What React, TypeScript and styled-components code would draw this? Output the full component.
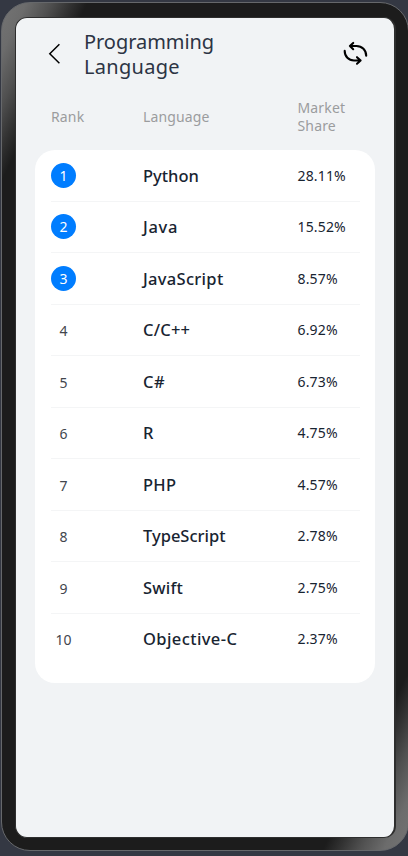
import React from "react";
import styled, { createGlobalStyle } from "styled-components";

const GlobalStyle = createGlobalStyle`
  * { box-sizing: border-box; }
  body { margin: 0; background: #343843; overflow: hidden; }
`;

const Desk = styled.div`
  width: 408px;
  height: 856px;
  padding: 2px 0 0 1px;
  overflow: hidden;
  background: #343843;
  font-family: "Noto Sans", "Open Sans", sans-serif;
`;

const Device = styled.div`
  width: 408px;
  height: 849px;
  padding: 14px 11px 13px 13px;
  border: 1px solid #66686b;
  border-radius: 29px;
  background: linear-gradient(
    to bottom right,
    #747474 0%, #6c6c6c 3%, #505050 6%, #323232 8.5%, #1c1c1c 10.5%,
    #1c1c1c 89.5%, #323232 91.5%, #505050 94%, #6c6c6c 97%, #747474 100%
  );
`;

const Screen = styled.main`
  width: 381px;
  height: 821px;
  border: 1px solid #2e2e2e;
  border-right-width: 2px;
  border-radius: 12px;
  background: #f1f3f5;
  overflow: hidden;
  display: flex;
  flex-direction: column;
`;

const TitleBar = styled.header`
  display: flex;
  align-items: center;
  height: 70px;
  padding: 1px 26px 0 31px;
`;

const IconButton = styled.button`
  display: flex;
  padding: 0;
  border: 0;
  background: none;
  color: #000;
`;

const Title = styled.h1`
  flex: 1;
  margin: 0 0 0 23px;
  font-size: 20px;
  font-weight: 400;
  line-height: 25px;
  color: #2c3444;
`;

const TitleLine = styled.span<{ $spacing: number }>`
  display: block;
  letter-spacing: ${({ $spacing }) => $spacing}px;
`;

const columns = "92px 154.5px 1fr";

const TableHead = styled.div`
  display: grid;
  grid-template-columns: ${columns};
  align-items: center;
  height: 62px;
  margin: 0 19px;
  padding: 0 0 5px 16px;
  font-size: 14px;
  line-height: 18px;
  color: #9b9c9e;
`;

const HeadCell = styled.span`
  max-width: 72px;
  letter-spacing: 0.15px;
`;

const Card = styled.section`
  height: 533px;
  margin: 0 19px;
  padding: 0 15px 0 16px;
  border-radius: 20px;
  background: #fff;
`;

const Row = styled.div`
  display: grid;
  grid-template-columns: ${columns};
  align-items: center;
  height: 51.5px;
  border-bottom: 1px solid #f4f5f6;
  &:last-child { border-bottom-color: transparent; }
`;

const Rank = styled.span<{ $top: boolean }>`
  width: 25px;
  height: 25px;
  border-radius: 50%;
  background: ${({ $top }) => ($top ? "#007dff" : "transparent")};
  color: ${({ $top }) => ($top ? "#fff" : "#42464d")};
  font-size: 14px;
  line-height: ${({ $top }) => ($top ? 25 : 28)}px;
  text-align: center;
`;

const Name = styled.span<{ $spacing: number }>`
  padding-top: 1px;
  font-size: 16.5px;
  font-weight: 500;
  line-height: 22px;
  letter-spacing: ${({ $spacing }) => $spacing}px;
  color: #182431;
  white-space: nowrap;
`;

const Share = styled.span`
  padding-top: 0.5px;
  font-size: 14px;
  line-height: 20px;
  letter-spacing: 0.15px;
  color: #182431;
`;

const languages: [string, string, number][] = [
  ["Python", "28.11%", 0],
  ["Java", "15.52%", 0.7],
  ["JavaScript", "8.57%", 0.3],
  ["C/C++", "6.92%", 0.2],
  ["C#", "6.73%", 0.6],
  ["R", "4.75%", 0],
  ["PHP", "4.57%", 0.3],
  ["TypeScript", "2.78%", 0],
  ["Swift", "2.75%", 0.2],
  ["Objective-C", "2.37%", 0.4],
];

const BackIcon = () => (
  <svg width="14" height="22" viewBox="0 0 14 22" fill="none" stroke="currentColor" strokeWidth="1.5">
    <path d="M12.4 1.3 2.8 10.8l9.6 9.4" />
  </svg>
);

const RefreshIcon = () => (
  <svg width="26" height="27" viewBox="0 0 26 27" fill="none" stroke="currentColor" strokeWidth="2.1" strokeLinecap="round" strokeLinejoin="round">
    <path d="M7.9 6h6.6c5.6 0 9.7 4.3 9.7 9.7M11.2 2.9 7.9 6l3.3 3.2" />
    <path d="M2.7 10.9c0 5.6 4 9.6 9.3 9.6h6.6M15 17.2l3.6 3.3-3.6 3.2" />
  </svg>
);

export default function App() {
  return (
    <>
      <GlobalStyle />
      <Desk>
        <Device>
          <Screen>
            <TitleBar>
              <IconButton aria-label="Back"><BackIcon /></IconButton>
              <Title>
                <TitleLine $spacing={-0.05}>Programming </TitleLine>
                <TitleLine $spacing={0.3}>Language</TitleLine>
              </Title>
              <IconButton aria-label="Refresh"><RefreshIcon /></IconButton>
            </TitleBar>
            <TableHead>
              <HeadCell>Rank</HeadCell>
              <HeadCell>Language</HeadCell>
              <HeadCell>Market Share</HeadCell>
            </TableHead>
            <Card>
              {languages.map(([name, share, spacing], i) => (
                <Row key={name}>
                  <Rank $top={i < 3}>{i + 1}</Rank>
                  <Name $spacing={spacing}>{name}</Name>
                  <Share>{share}</Share>
                </Row>
              ))}
            </Card>
          </Screen>
        </Device>
      </Desk>
    </>
  );
}
